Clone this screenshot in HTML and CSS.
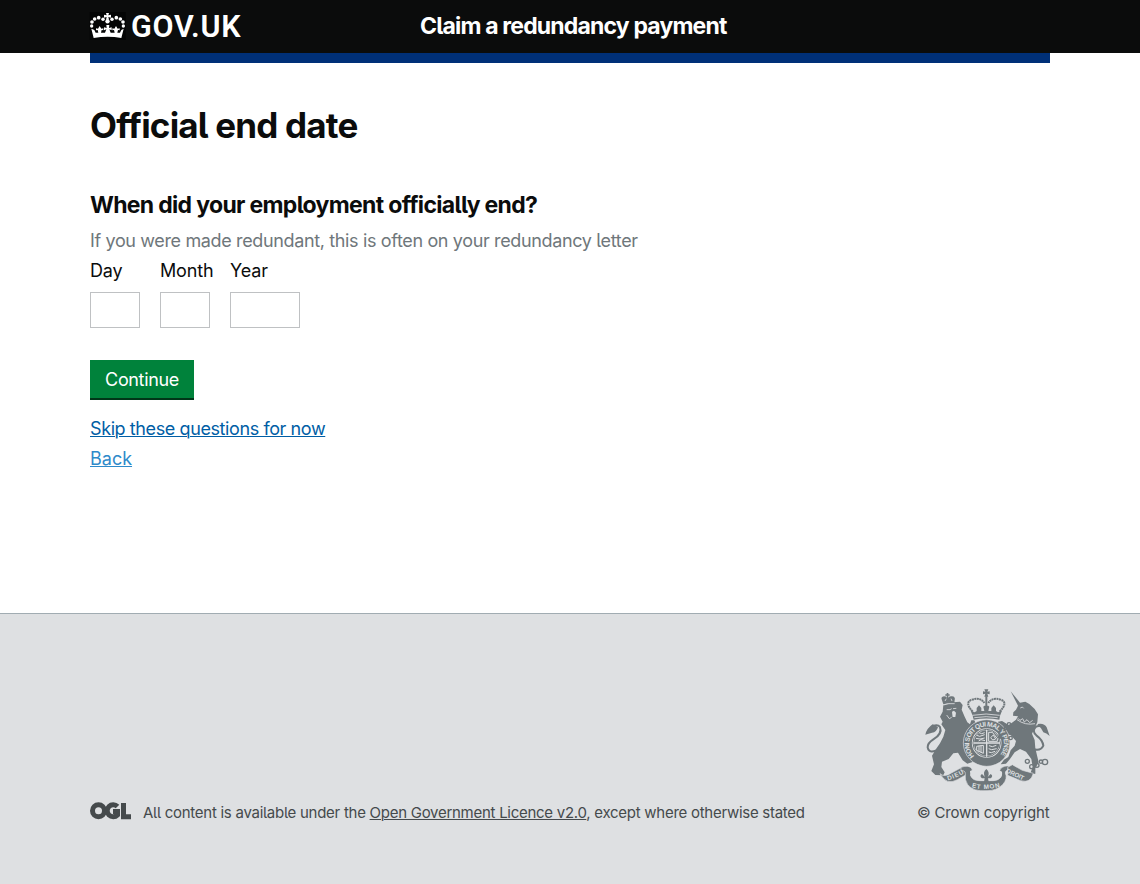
FILE: index.html
```html
<!DOCTYPE html>
<html lang="en">
<head>
<meta charset="utf-8">
<title>Official end date</title>
<link rel="stylesheet" href="styles.css">
</head>
<body>
<header class="header">
  <div class="header-inner">
    <a class="logo" href="#">
      <svg class="crown" viewBox="0 0 120 96" aria-hidden="true">
        <rect x="5" y="6" width="108" height="84" fill="#040505"/>
        <g fill="#fff">
          <path d="M54 9h9l-2 7 8-2v9l-8-2 2 8h-9l2-8-8 2v-9l8 2z"/>
          <circle cx="58.500" cy="34" r="6.500"/>
          <circle cx="45" cy="28" r="5.200"/><circle cx="72" cy="28" r="5.200"/>
          <circle cx="32" cy="23" r="5.500"/><circle cx="85" cy="23" r="5.500"/>
          <circle cx="20" cy="27" r="5.500"/><circle cx="97" cy="27" r="5.500"/>
          <circle cx="12" cy="36" r="5.500"/><circle cx="105" cy="36" r="5.500"/>
          <circle cx="11" cy="48" r="5"/><circle cx="106" cy="48" r="5"/>
          <path d="M17 84L10 56l9 4 4 8 8 0-2-8-5 1v-6l6 1 5-8 5 8 6-1v6l-5-1-2 8 12 0 4-10-7 3v-9l8 2-1-9h9l-1 9 8-2v9l-7-3 4 10 12 0-2-8-5 1v-6l6 1 5-8 5 8 6-1v6l-5-1-2 8 8 0 4-8 7-4-7 28q-41-8-83 0z"/>
        </g>
      </svg>
      <span class="logo-text">GOV.UK</span>
    </a>
    <div class="service">Claim a redundancy payment</div>
  </div>
</header>
<div class="bar"></div>
<main class="content">
  <h1 class="title">Official end date</h1>
  <form>
    <h2 class="question">When did your employment officially end?</h2>
    <p class="hint">If you were made redundant, this is often on your redundancy letter</p>
    <div class="dates">
      <label class="field"><span>Day</span><input type="text"></label>
      <label class="field"><span>Month</span><input type="text"></label>
      <label class="field field-year"><span>Year</span><input type="text"></label>
    </div>
    <button class="button" type="button">Continue</button>
  </form>
  <a class="link" href="#">Skip these questions for now</a>
  <a class="link link-back" href="#">Back</a>
</main>
<footer class="footer">
  <div class="footer-inner">
    <div class="licence">
      <svg class="ogl" viewBox="0 0 41 18" role="img" aria-label="OGL">
        <g fill="none" stroke="#454a4c" stroke-width="5">
          <circle cx="8.500" cy="8.700" r="6"/>
          <path d="M27.500 4.600A6 6 0 1 0 27.500 13V9.500H23"/>
          <path d="M33.500 1V14.700H41"/>
        </g>
      </svg>
      <p class="licence-text">All content is available under the <a href="#">Open Government Licence v2.0</a>, except where otherwise stated</p>
    </div>
    <div class="copyright">
      <svg class="arms" viewBox="0 0 396 324" aria-hidden="true">
        <g fill="#6f777b">
          <!-- lion -->
          <path d="M70 60L100 52 120 50 128 60 125 74 134 95 142 112 150 118 154 106 163 106 168 116 162 128 150 142 144 156 148 178 146 200 160 220 160 230 142 236 128 226 114 203 100 205 86 222 66 230 64 246 74 262 70 271 46 270 34 258 42 238 36 212 48 192 60 175 70 155 76 135 64 118 68 110 60 95 68 80z"/>
          <path d="M16 149Q20 130 38 118L54 126Q50 142 36 143z"/>
          <path d="M70 58l-4-12q-5-10 6-12 6 0 9 4l-1-6-4 0v-4h4v-4h5v4h4v4l-4 0v6q4-5 11-4 11 1 8 12l-1 9q-16-2-33 3z"/>
          <!-- unicorn -->
          <path d="M272 19L300 53 316 50 328 57 344 72 354 88 352 112 344 130 336 146 344 165 346 190 352 215 356 232 346 250 346 266 330 268 338 246 334 222 318 200 300 192 284 202 270 222 258 236 242 238 252 224 265 216 272 196 284 182 288 168 272 150 252 148 244 162 234 160 236 142 250 134 246 124 234 118 234 110 246 108 266 120 278 112 288 104 294 94 279 92 280 82 288 74 294 62z"/>
          <path d="M352 117q21-4 28 10l9 26q-10-9-19-11l-7-12z"/>
          <!-- crown of the arms -->
          <path d="M193 13h12l-3 7 7-1v9l-7-2 3 9h-12l3-9-7 2v-9l7 1z"/>
          <path d="M158 92l-6-15 12 5 6-4 0-9 7-8 7 8 0 9 9 0-3-13 3-3h12l3 3-3 13 9 0 0-9 7-8 7 8 0 9 6 4 12-5-6 15-2 12q-38-7-77 0z"/>
        </g>
        <g fill="none" stroke="#6f777b">
          <path d="M158 80Q132 52 156 44Q182 36 193 54M239 80Q266 52 242 44Q216 36 205 54" stroke-width="6" stroke-dasharray="6 1.500"/>
          <path d="M199 34V76" stroke-width="6"/>
          <path d="M61 190Q27 210 23 187Q23 174 39 164Q68 147 60 126Q54 118 39 123" stroke-width="6"/>
          <path d="M338 192Q362 200 370 182Q368 165 349 151Q335 138 347 126Q356 119 372 127" stroke-width="6"/>
          <circle cx="200" cy="174" r="57" stroke-width="25"/>
          <circle cx="200" cy="174" r="70" stroke="#dee0e2" stroke-width="2"/>
          <circle cx="200" cy="174" r="41" stroke-width="3"/>
          <g stroke-width="4">
            <circle cx="267" cy="118" r="5"/><circle cx="258" cy="129" r="5"/><circle cx="272" cy="159" r="5"/>
            <circle cx="322" cy="229" r="6"/><circle cx="335" cy="245" r="6"/><circle cx="351" cy="241" r="6"/><circle cx="363" cy="230" r="5"/><circle cx="375" cy="231" r="8"/>
          </g>
        </g>
        <!-- quartered shield -->
        <circle cx="200" cy="174" r="38" fill="#6f777b"/>
        <g stroke="#dee0e2" fill="none" stroke-width="3">
          <path d="M200 135v80M161 174h79" stroke-width="4"/>
          <path d="M170 151l9 3 15-5M168 160l12 2 14-3M177 143l8 3 9-3M176 168l7-4 12 3"/>
          <path d="M206 142v27h26v-8l-15-19zM212 158l8-8 7 12-9 3z"/>
          <path d="M170 184v12l20 9v-24zM177 182v18M183 181v22"/>
          <path d="M207 182l10 3 12-4M206 191l9 3 15-3M206 201l8 2 11-4"/>
        </g>
        <!-- mane, face, crown and collar highlights -->
        <g fill="none" stroke="#dee0e2" stroke-width="2.500">
          <path d="M70 60q16-6 34-4M75 48l4-7M96 48l-3-7M80 74l10 0 5-3M99 71l10-1M80 90l8 11 7-4"/>
          <path d="M157 91q42-8 82 0M163 98q36-6 70 0"/>
          <path d="M301 69l6-3 4 4M291 104q24 18 54 12M294 100l6 6 8-5 5 10 8-7 8 9 9-7"/>
        </g>
        <path d="M96 80l6-3 6 6-2 13-8 0z" fill="#dee0e2"/>
        <!-- motto ribbon -->
        <g fill="#6f777b" stroke="#dee0e2" stroke-width="2">
          <path d="M60 266q14 12 34-2l37-20 10 24-29 16q-32 19-52-18z"/>
          <path d="M123 247q24-9 33 5 3 11-5 18 6 18 29 17h38q21 1 26-17-12-14 3-23 14-9 30 1l-7 9q-13-5-14 7 8 17-8 35-20 19-47 18-41 4-58-18-10-14-7-34-1-10-13-7z"/>
          <path d="M263 247l14-8 30 17 15 4 18 5q-8 31-38 22l-39-16z"/>
        </g>
        <path d="M150 258q0 16 8 22 10 8 42 7 30 1 40-7 8-6 6-20-18-12-46-12t-50 10z" fill="#dee0e2"/>
        <path d="M199 252q12 11 4 24l9-9q9 6 0 13l-8 0 2 11h-14l2-11-8 0q-9-7 0-13l9 9q-8-13 4-24z" fill="#6f777b"/>
        <defs>
          <path id="garter" d="M163 213A52 52 0 1 1 237 213"/>
          <path id="motto-left" d="M84 286Q101 282 137 263"/>
          <path id="motto-mid" d="M155 307Q199 319 250 303"/>
          <path id="motto-right" d="M257 262L316 289.500"/>
        </defs>
        <g class="motto" fill="#dee0e2">
          <text class="garter-text"><textPath href="#garter" textLength="238">HONI SOIT QUI MAL Y PENSE</textPath></text>
          <text><textPath href="#motto-left" textLength="53">DIEU</textPath></text>
          <text><textPath href="#motto-mid" textLength="86">ET MON</textPath></text>
          <text><textPath href="#motto-right" textLength="57">DROIT</textPath></text>
        </g>
      </svg>
      <a class="copyright-link" href="#">© Crown copyright</a>
    </div>
  </div>
</footer>
</body>
</html>
```
FILE: styles.css
```css
* { box-sizing: border-box; }
body {
  margin: 0;
  min-height: 884px;
  display: flex;
  flex-direction: column;
  background: #fff;
  color: #0b0c0c;
  font-family: Inter, Roboto, "Liberation Sans", sans-serif;
  font-feature-settings: "cv05" 1, "calt" 0;
  font-size: 18px;
  line-height: 25px;
}
h1, h2, p { margin: 0; }
.header { height: 53px; background: #0b0c0c; color: #fff; }
.header-inner, .content, .footer-inner, .bar { width: 960px; margin: 0 auto; }
.header-inner { display: grid; grid-template-columns: 330px 1fr; }
.logo { display: flex; color: #fff; text-decoration: none; }
.crown { width: 40px; height: 32px; margin: 10px 0 0 -2px; }
.logo-text {
  margin: 9px 0 0 3px;
  font: 600 30.500px/36px Roboto, "Liberation Sans", sans-serif;
  letter-spacing: 0.7px;
}
.service { padding-top: 11px; font-size: 23px; font-weight: 700; line-height: 30px; letter-spacing: -0.83px; white-space: nowrap; }
.bar { height: 10px; background: #003078; }
.content { flex: 1; padding-top: 42px; }
.title { font-size: 35px; font-weight: 700; line-height: 40px; letter-spacing: -0.82px; }
.question { margin-top: 45px; font-size: 23px; font-weight: 700; line-height: 30px; letter-spacing: -0.68px; }
.hint { margin-top: 8px; color: #6f777b; letter-spacing: -0.36px; }
.dates { display: flex; gap: 20px; margin-top: 5px; }
.field { width: 50px; letter-spacing: -0.15px; }
.field span { display: block; height: 34px; }
.field-year { width: 70px; }
.field input { display: block; width: 100%; height: 36px; border: 1px solid #bfc1c3; background: #fff; }
.button {
  display: block;
  width: 104px;
  height: 40px;
  margin-top: 32px;
  padding: 0 0 2px;
  border: 0;
  background: #00823b;
  box-shadow: inset 0 -2px 0 #003618;
  color: #fff;
  font: inherit;
  letter-spacing: -0.35px;
}
.link { display: table; margin-top: 16px; color: #005ea5; letter-spacing: -0.4px; text-underline-offset: 1px; text-decoration-thickness: 1px; }
.link-back { margin-top: 5px; color: #2e8aca; letter-spacing: 0; }
.footer { height: 271px; border-top: 1px solid #a1acb2; background: #dee0e2; color: #454a4c; font-size: 15px; line-height: 20px; }
.footer a { color: #454a4c; }
.footer-inner { display: flex; justify-content: space-between; padding-top: 71px; }
.licence { display: flex; padding-top: 117px; }
.ogl { width: 41px; height: 18px; margin-right: 12px; }
.licence-text { padding-top: 1px; white-space: nowrap; letter-spacing: -0.27px; }
.licence a { text-underline-offset: 1px; text-decoration-thickness: 1px; }
.copyright { width: 133px; display: flex; flex-direction: column; }
.arms { width: 132px; height: 108px; margin-left: 3px; }
.footer .copyright-link { margin-top: 10px; text-decoration: none; white-space: nowrap; letter-spacing: -0.2px; }
.motto { font: bold 19px "Liberation Sans", sans-serif; }
.garter-text { font-size: 20px; }
```
